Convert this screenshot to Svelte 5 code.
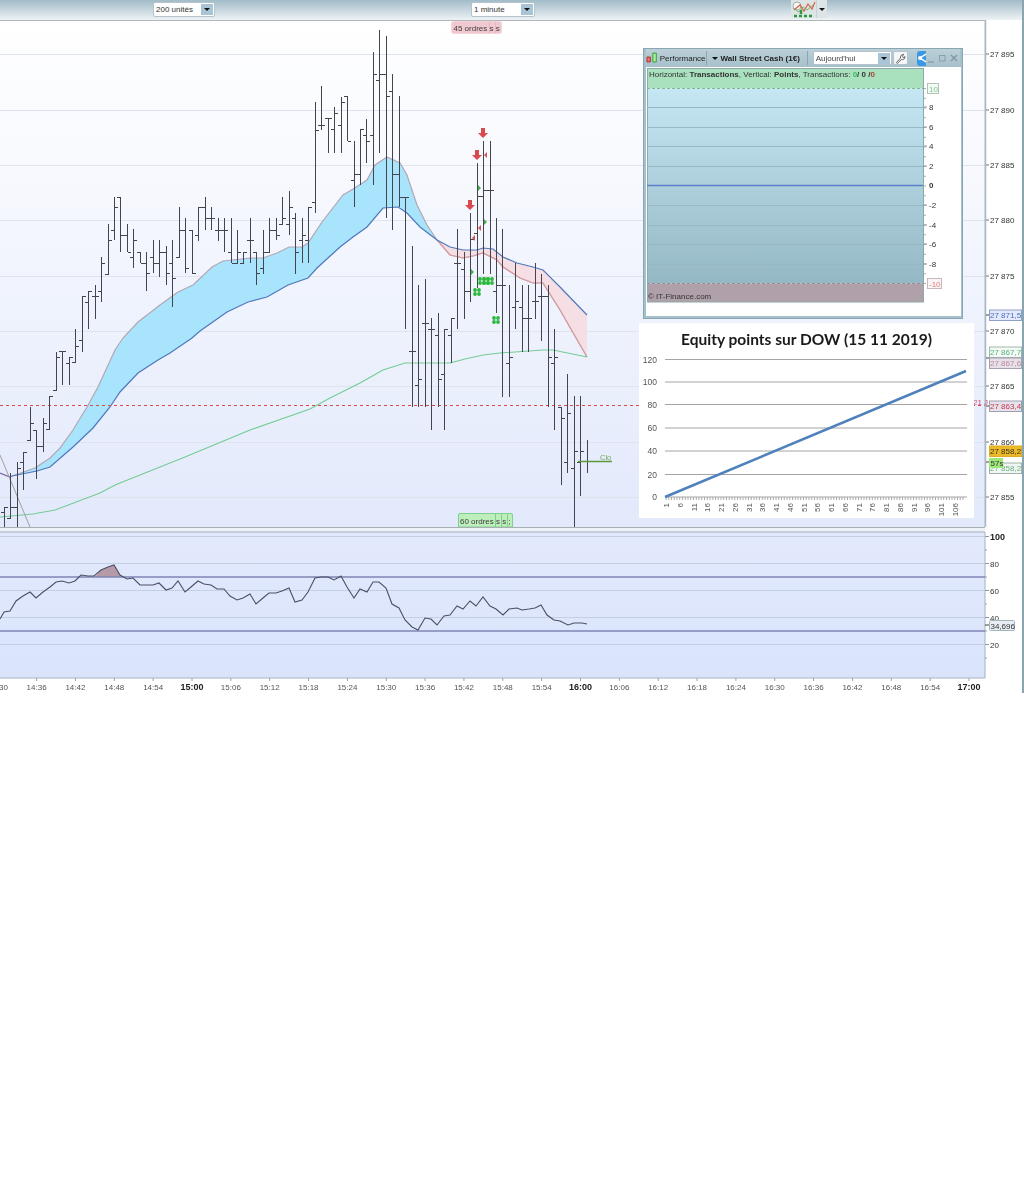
<script lang="ts">
	// [high, low, open, close] in page pixels, one bar per minute
	const bars = [
		[507, 527, 512, 507], [473, 518, 518, 507], [462, 527, 507, 468], [452, 490, 462, 452],
		[407, 440, 440, 423], [430, 479, 430, 446], [418, 452, 446, 423], [396, 429, 429, 396],
		[352, 390, 390, 357], [351, 385, 351, 351], [357, 385, 363, 357], [329, 362, 362, 346],
		[296, 352, 340, 296], [291, 329, 302, 291], [285, 319, 296, 296], [257, 302, 291, 263],
		[224, 274, 274, 240], [197, 240, 230, 207], [197, 252, 197, 235], [224, 252, 235, 252],
		[229, 268, 257, 240], [252, 263, 252, 263], [252, 291, 263, 273], [240, 273, 257, 263],
		[240, 277, 263, 252], [246, 285, 252, 273], [240, 307, 263, 278], [207, 257, 257, 230],
		[218, 273, 230, 268], [230, 274, 230, 273], [207, 241, 235, 207], [197, 230, 207, 218],
		[207, 230, 218, 218], [218, 241, 230, 230], [218, 252, 230, 230], [218, 263, 252, 263],
		[230, 263, 263, 252], [252, 263, 263, 252], [218, 263, 240, 240], [252, 285, 252, 273],
		[230, 274, 268, 252], [218, 252, 252, 230], [218, 240, 230, 235], [197, 224, 224, 218],
		[191, 235, 224, 207], [213, 274, 218, 252], [218, 263, 240, 235], [207, 263, 240, 207],
		[102, 213, 202, 130], [86, 130, 125, 125], [118, 153, 118, 118], [107, 153, 129, 113],
		[97, 153, 125, 102], [96, 141, 96, 141], [141, 207, 180, 174], [129, 185, 174, 129],
		[119, 163, 135, 141], [52, 185, 135, 74], [30, 153, 80, 74], [36, 218, 74, 96],
		[74, 230, 91, 174], [96, 207, 174, 197], [197, 329, 197, 197], [246, 407, 351, 351],
		[285, 407, 385, 379], [279, 407, 323, 323], [318, 430, 329, 329], [313, 407, 335, 379],
		[329, 430, 374, 329], [318, 363, 335, 318], [229, 329, 263, 263], [252, 319, 269, 291],
		[213, 302, 291, 239], [163, 288, 233, 196], [141, 274, 196, 190], [141, 274, 190, 190],
		[218, 313, 291, 285], [229, 397, 285, 285], [285, 397, 363, 357], [263, 329, 307, 301],
		[285, 352, 307, 318], [285, 352, 318, 318], [263, 319, 301, 301], [274, 341, 296, 296],
		[285, 407, 296, 357], [329, 430, 363, 357], [407, 485, 407, 418], [374, 473, 462, 413],
		[396, 527, 468, 451], [396, 496, 462, 451], [440, 473, 461, 461]
	];
	const barX = (k: number) => Math.round(3.9 + 6.475 * k) + 0.5;

	const ribbonTop = [[12, 476], [35, 468], [50, 458], [60, 448], [73, 430], [87, 407], [98, 387], [115, 350], [123, 338], [138, 322], [160, 305], [178, 292], [193, 285], [212, 267], [223, 261], [250, 258], [263, 258], [277, 253], [289, 247], [302, 247], [308, 243], [322, 222], [343, 195], [353, 189], [367, 180], [375, 165], [387, 157], [400, 163], [407, 175], [417, 205], [427, 225], [437, 240], [450, 255], [463, 258], [473, 256], [483, 253], [497, 260], [503, 267], [520, 278], [533, 283], [543, 283], [560, 310], [587, 357]];
	const ribbonLow = [[12, 476], [37, 471], [50, 467], [73, 447], [93, 428], [110, 407], [120, 392], [138, 373], [158, 360], [170, 353], [192, 338], [200, 331], [227, 312], [248, 302], [267, 297], [288, 285], [308, 278], [317, 268], [340, 247], [353, 237], [367, 227], [383, 208], [398, 207], [407, 213], [420, 227], [437, 240], [450, 247], [463, 250], [477, 250], [483, 248], [493, 249], [503, 257], [517, 263], [533, 267], [543, 270], [560, 287], [587, 315]];
	const longMa = [[0, 517], [33, 514], [55, 510], [100, 493], [115, 485], [185, 457], [250, 430], [310, 409], [330, 398], [360, 383], [383, 370], [405, 363], [450, 363], [465, 359], [483, 355], [500, 353], [543, 350], [553, 350], [587, 357]];
	const rsi = [[0, 619], [4, 612], [10, 611], [16, 601], [23, 596], [30, 592], [36, 598], [43, 592], [50, 587], [56, 582], [62, 581], [69, 583], [75, 581], [81, 575], [88, 576], [94, 576], [101, 570], [108, 567], [114, 565], [120, 575], [127, 579], [133, 578], [140, 585], [146, 585], [153, 585], [159, 583], [166, 590], [172, 588], [178, 581], [185, 592], [191, 587], [198, 581], [204, 584], [211, 585], [217, 589], [224, 589], [230, 596], [237, 600], [243, 598], [250, 594], [256, 604], [263, 598], [269, 593], [276, 593], [282, 591], [289, 588], [295, 602], [302, 600], [308, 592], [315, 578], [321, 577], [328, 577], [334, 580], [341, 576], [347, 587], [354, 598], [360, 589], [367, 592], [373, 582], [379, 582], [386, 588], [392, 604], [399, 608], [405, 620], [412, 627], [418, 630], [425, 618], [431, 619], [437, 625], [444, 616], [450, 615], [457, 606], [463, 609], [470, 601], [476, 606], [483, 597], [490, 606], [496, 609], [503, 615], [509, 609], [517, 608], [522, 610], [529, 609], [535, 608], [541, 605], [547, 615], [554, 620], [560, 621], [568, 625], [574, 623], [582, 623], [587, 624]];

	const toPoints = (pts: number[][]) => pts.map((p) => p.join(',')).join(' ');

	// the two averages cross once, at (437, 240)
	const crossAt = (pts: number[][]) => pts.findIndex((p) => p[0] === 437);
	const bullFill = [...ribbonTop.slice(0, crossAt(ribbonTop) + 1), ...ribbonLow.slice(0, crossAt(ribbonLow)).reverse()];
	const bearFill = [...ribbonTop.slice(crossAt(ribbonTop)), ...ribbonLow.slice(crossAt(ribbonLow)).reverse()];

	const priceGrid = [54, 110, 165, 220, 276, 331, 386, 442, 497];
	const priceLabels = [
		['27 895', 54], ['27 890', 110], ['27 885', 165], ['27 880', 220], ['27 875', 276],
		['27 870', 331], ['27 865', 386], ['27 860', 442], ['27 855', 497]
	];
	const priceTags = [
		{ text: '27 871,5', y: 315, fill: '#e4eafc', stroke: '#8fa0c8', color: '#4a6cc4' },
		{ text: '27 867,7', y: 352, fill: '#f4f8f6', stroke: '#9fb8a8', color: '#4fb878' },
		{ text: '27 867,6', y: 363, fill: '#e6e0ea', stroke: '#a8a0ac', color: '#c08a98' },
		{ text: '27 863,4', y: 406, fill: '#e4e2ec', stroke: '#a0a0ac', color: '#c8384c' },
		{ text: '27 858,2', y: 468, fill: '#f2f6f2', stroke: '#9fb0a8', color: '#68b080' },
		{ text: '27 858,2', y: 451, fill: '#ecb92a', stroke: '#e0ac20', color: '#3c3418' }
	];

	const timeLabels = ['14:36', '14:42', '14:48', '14:54', '15:00', '15:06', '15:12', '15:18', '15:24', '15:30', '15:36', '15:42', '15:48', '15:54', '16:00', '16:06', '16:12', '16:18', '16:24', '16:30', '16:36', '16:42', '16:48', '16:54', '17:00'];
	const timeX = (i: number) => 36.6 + 38.85 * i;

	const redArrows = [[470, 205], [477, 155], [483, 133]];
	const clovers = [[477, 292], [482, 281], [486, 281], [490, 281], [496, 320]];
	const redFlags = [[486, 155], [480, 228], [474, 238]];
	const greenFlags = [[479, 188], [485, 222], [472, 272]];

	const perfGrid = [107, 127, 146, 166, 205, 225, 244, 264];
	const perfLabels = [['8', 107], ['6', 127], ['4', 146], ['2', 166], ['-2', 205], ['-4', 225], ['-6', 244], ['-8', 264]];
	const perfMinor = Array.from({ length: 21 }, (_, i) => 88.5 + i * 9.75);

	const equityGrid = [[120, 359.5], [100, 382], [80, 404.5], [60, 428], [40, 451], [20, 474.5], [0, 497]];
	const equityTicks = Array.from({ length: 22 }, (_, i) => (i === 0 ? 1 : i * 5 + 1));
	const oscMinor = Array.from({ length: 10 }, (_, i) => 536.5 + i * 13.5);
</script>

<div class="terminal">
	<header class="toolbar">
		<div class="picker units"><span>200 unités</span><i></i></div>
		<div class="picker period"><span>1 minute</span><i></i></div>
		<div class="chart-style">
			<svg width="25" height="18" viewBox="0 0 25 18">
				<circle cx="6" cy="6" r="4" fill="#f6f8f6" stroke="#a8b0a8" />
				<path d="M3 10 9 5 13 11 17 4 21 9 24 2" fill="none" stroke="#d8604c" stroke-width="1.2" />
				<path d="M2 8 8 12 12 7 16 10 22 5" fill="none" stroke="#78b868" stroke-width="1" />
				<path d="M3 16h3M8 16h3M13 16h3M18 16h3M10 10v4" stroke="#2c9a3c" stroke-width="2.4" />
			</svg>
			<i></i>
		</div>
	</header>

	<section class="price-pane">
		<svg class="chart" width="1022" height="508" viewBox="0 20 1022 508">
			<defs>
				<linearGradient id="paneBg" x1="0" y1="0" x2="0" y2="1">
					<stop offset="0" stop-color="#ffffff" />
					<stop offset="0.3" stop-color="#f7f9fe" />
					<stop offset="1" stop-color="#e2e9fb" />
				</linearGradient>
			</defs>
			<rect x="0" y="20" width="985" height="507" fill="url(#paneBg)" />
			{#each priceGrid as y}
				<line x1="0" x2="985" y1={y + 0.5} y2={y + 0.5} stroke="#dfe3ee" />
			{/each}

			<polygon points={toPoints(bullFill)} fill="#a8e4fc" />
			<polygon points={toPoints(bearFill)} fill="#f6dfe4" />
			<polyline points={toPoints(ribbonTop)} fill="none" stroke="#b4a6b4" stroke-width="1.2" />
			<polyline points={toPoints(ribbonTop.slice(crossAt(ribbonTop)))} fill="none" stroke="#dc9e9e" stroke-width="1.2" />
			<polyline points={toPoints(ribbonLow)} fill="none" stroke="#4f78bc" stroke-width="1.2" />
			<polyline points="0,473 10,477 12,476" fill="none" stroke="#7c64a8" stroke-width="1.2" />
			<polyline points={toPoints(longMa)} fill="none" stroke="#74cc94" stroke-width="1.1" />
			<line x1="0" x2="30" y1="455" y2="527" stroke="#a0a0a0" />
			<line x1="0" x2="985" y1="405.5" y2="405.5" stroke="#e04848" stroke-dasharray="3 3" />

			{#each bars as [high, low, open, close], k}
				<g stroke="#44444e" shape-rendering="crispEdges">
					<line x1={barX(k)} x2={barX(k)} y1={high} y2={low} />
					<line x1={barX(k) - 3.5} x2={barX(k)} y1={open + 0.5} y2={open + 0.5} />
					<line x1={barX(k)} x2={barX(k) + 3.5} y1={close + 0.5} y2={close + 0.5} />
				</g>
			{/each}

			{#each redArrows as [x, y]}
				<path d="M{x - 2} {y - 5}h4v5h3l-5 5-5-5h3z" fill="#d84a50" />
			{/each}
			{#each redFlags as [x, y]}
				<path d="M{x - 2} {y}l3-3v6z" fill="#d4555a" />
			{/each}
			{#each greenFlags as [x, y]}
				<path d="M{x + 2} {y}l-3-3v6z" fill="#44b050" />
			{/each}
			{#each clovers as [x, y]}
				<g fill="#2cb83c">
					<circle cx={x - 2} cy={y - 2} r="1.9" />
					<circle cx={x + 2} cy={y - 2} r="1.9" />
					<circle cx={x - 2} cy={y + 2} r="1.9" />
					<circle cx={x + 2} cy={y + 2} r="1.9" />
				</g>
			{/each}

			<line x1="578" x2="612" y1="461.5" y2="461.5" stroke="#5a9a3c" stroke-width="1.4" />
			<text class="clo" x="600" y="460">Clo</text>

			<rect x="451.5" y="21.5" width="50" height="12" rx="2" fill="#f0c8d0" stroke="#f4d4da" />
			<line x1="489.5" x2="489.5" y1="22" y2="33" stroke="#e4b4c0" />
			<line x1="495.5" x2="495.5" y1="22" y2="33" stroke="#e4b4c0" />
			<text class="tag" x="453.5" y="30.5">45 ordres s s</text>
			<path d="M458.5 527v-12q0-1.500 1.500-1.500h51q1.500 0 1.500 1.500v12z" fill="#bdeebc" stroke="#7ed08c" />
			<line x1="495.5" x2="495.5" y1="514" y2="527" stroke="#7ed08c" />
			<line x1="501.5" x2="501.5" y1="514" y2="527" stroke="#7ed08c" />
			<line x1="507.5" x2="507.5" y1="514" y2="527" stroke="#7ed08c" />
			<text class="tag" x="460" y="524">60 ordres s s ;</text>

			<line x1="985.5" x2="985.5" y1="20" y2="527" stroke="#a9b8c4" stroke-width="2" />
			<line x1="0" x2="985" y1="527.5" y2="527.5" stroke="#a8b0b4" />
			<rect x="986.5" y="20" width="36" height="508" fill="#fff" />
			{#each priceLabels as [label, y]}
				<line x1="986" x2="989" y1={y} y2={y} stroke="#777" />
				<text class="axis" x="990" y={Number(y) + 3}>{label}</text>
			{/each}
			{#each [315, 358, 406, 462] as y}
				<line x1="986" x2="989" y1={y} y2={y} stroke="#444" />
			{/each}
			<text class="stop" x="973" y="405">21 J</text>
			{#each priceTags as tag}
				<rect x="989.5" y={tag.y - 5} width="32" height="10.5" fill={tag.fill} stroke={tag.stroke} />
				<text class="axis" x="990" y={tag.y + 3} fill={tag.color} style="fill: {tag.color}">{tag.text}</text>
			{/each}
			<rect x="989" y="458" width="14" height="10" fill="#9ce878" />
			<text class="axis" x="990.5" y="466">57s</text>
		</svg>

		<div class="perf-window">
			<div class="perf-title">
				<svg width="12" height="12" viewBox="0 0 12 12">
					<path d="M1 5h3.500v5h-3.500z" fill="#e87070" stroke="#b03030" />
					<path d="M7 1h3.500v9h-3.500z" fill="#a8f0a0" stroke="#30a030" />
				</svg>
				<span class="perf-name">Performance</span>
				<span class="sep"></span>
				<b class="perf-system"><i class="caret"></i>Wall Street Cash (1€)</b>
				<span class="sep"></span>
				<div class="picker today"><span>Aujourd'hui</span><i></i></div>
				<button class="wrench" aria-label="Réglages">
					<svg width="11" height="11" viewBox="0 0 12 12">
						<path d="M1.500 10.500 6 5.500C5.500 3.500 7 1.500 9.500 1.500L8 3.500l1 1.500 2-1C11 6 9 8 7 7l-4.500 4.500z" fill="#fff" stroke="#444" stroke-width="0.9" />
					</svg>
				</button>
				<span class="share">
					<svg width="9" height="14" viewBox="0 0 9 14">
						<path d="M9 3 3 7l6 4" fill="none" stroke="#fff" stroke-width="1.500" />
						<circle cx="3" cy="7" r="2" fill="#fff" />
					</svg>
				</span>
				<span class="win-controls">
					<svg width="32" height="9" viewBox="0 0 32 9">
						<path d="M0 8h6" stroke="#8aa0aa" stroke-width="1.400" />
						<rect x="11.500" y="1.500" width="5.500" height="5.500" fill="none" stroke="#8aa0aa" />
						<path d="M23 1l6 6M29 1l-6 6" stroke="#7f959f" stroke-width="1.300" />
					</svg>
				</span>
			</div>
			<svg class="perf-plot" width="315" height="249" viewBox="646 67 315 249">
				<defs>
					<linearGradient id="perfBg" x1="0" y1="0" x2="0" y2="1">
						<stop offset="0" stop-color="#c5e7f3" />
						<stop offset="1" stop-color="#95b8c5" />
					</linearGradient>
				</defs>
				<rect x="647" y="68" width="276" height="20.5" fill="#a9e1bf" />
				<rect x="647" y="88.5" width="276" height="195" fill="url(#perfBg)" />
				<rect x="647" y="283.5" width="276" height="18.5" fill="#b0a0aa" />
				<rect x="647.5" y="68.5" width="276" height="233.5" fill="none" stroke="#8ea9a9" />
				{#each perfGrid as y}
					<line x1="647" x2="923" y1={y + 0.5} y2={y + 0.5} stroke="#98b8c4" />
				{/each}
				<line x1="647" x2="923" y1="88.5" y2="88.5" stroke="#80b898" stroke-dasharray="3 2" />
				<line x1="647" x2="923" y1="283.5" y2="283.5" stroke="#9c8c98" stroke-dasharray="3 2" />
				<line x1="647" x2="923" y1="185.5" y2="185.5" stroke="#5c80cc" stroke-width="1.4" />
				<text class="perf-text" x="649" y="77">Horizontal: <tspan class="strong">Transactions</tspan>, Vertical: <tspan class="strong">Points</tspan>, Transactions: <tspan class="strong ok">0</tspan><tspan class="strong"> / 0 / </tspan><tspan class="strong ko">0</tspan></text>
				<text class="perf-text" x="648" y="299">© IT-Finance.com</text>
				{#each perfMinor as y}
					<line x1="924" x2="926" y1={y} y2={y} stroke="#a0aeb4" />
				{/each}
				{#each perfLabels as [label, y]}
					<line x1="924" x2="927" y1={y} y2={y} stroke="#8a9aa0" />
					<text class="perf-text" x="929" y={Number(y) + 3}>{label}</text>
				{/each}
				<text class="perf-text strong" x="929" y="188">0</text>
				<rect x="927.5" y="83.5" width="11" height="10" fill="#f4faf4" stroke="#b0c4b4" />
				<text class="perf-text up" x="929" y="91.5">10</text>
				<rect x="927.5" y="278.5" width="14" height="10" fill="#fbf4f4" stroke="#c4b8bc" />
				<text class="perf-text down" x="929" y="286.5">-10</text>
			</svg>
		</div>

		<figure class="equity">
			<h3>Equity points sur DOW (15 11 2019)</h3>
			<svg width="335" height="168" viewBox="639 350 335 168">
				{#each equityGrid as [value, y]}
					<line x1="665" x2="967" y1={y} y2={y} stroke="#a4a4a4" />
					<text class="equity-y" x="657" y={y + 3}>{value}</text>
				{/each}
				{#each Array(109) as _, i}
					<line x1={666 + i * 2.75} x2={666 + i * 2.75} y1="497" y2="500" stroke="#aaa" />
				{/each}
				{#each equityTicks as tick}
					<text class="equity-x" transform="translate({666 + (tick - 1) * 2.75 + 3} 503) rotate(-90)">{tick}</text>
				{/each}
				<line x1="665" y1="497" x2="966" y2="371" stroke="#4f81bd" stroke-width="2.6" />
			</svg>
		</figure>
	</section>

	<section class="osc-pane">
		<svg width="1022" height="165" viewBox="0 528 1022 165">
			<defs>
				<linearGradient id="oscBg" x1="0" y1="0" x2="0" y2="1">
					<stop offset="0" stop-color="#e3e9fd" />
					<stop offset="1" stop-color="#d9e4fb" />
				</linearGradient>
			</defs>
			<rect x="0" y="528" width="985" height="4" fill="#eef2f8" />
			<rect x="0" y="532" width="985" height="146" fill="url(#oscBg)" />
			<line x1="0" x2="985" y1="532" y2="532" stroke="#a4b2bc" />
			<line x1="985" x2="985" y1="532" y2="678" stroke="#a4b2bc" />
			<line x1="0" x2="985" y1="678" y2="678" stroke="#a8b4c4" />
			{#each [536.5, 563.5, 590.5, 617.5, 644.5] as y}
				<line x1="0" x2="985" y1={y} y2={y} stroke="#c2cfe4" />
			{/each}
			<polygon points="95,577 101,570 108,567 114,565 120,575 122,577" fill="#b79aa8" />
			<line x1="0" x2="985" y1="577" y2="577" stroke="#7f84b4" stroke-width="1.4" />
			<line x1="0" x2="985" y1="631" y2="631" stroke="#7f84b4" stroke-width="1.4" />
			<polyline points={toPoints(rsi)} fill="none" stroke="#4c5064" stroke-width="1.1" />
			{#each oscMinor as y}
				<line x1="985" x2="987" y1={y} y2={y} stroke="#9aa6b0" />
			{/each}
			{#each [[100, 536.5], [80, 563.5], [60, 590.5], [40, 617.5], [20, 644.5]] as [value, y]}
				<line x1="985" x2="989" y1={y} y2={y} stroke="#8a96a0" />
				<text class="axis" class:strong={value === 100} x="990" y={y + 3}>{value}</text>
			{/each}
			<rect x="989.5" y="620.5" width="25" height="10" rx="1" fill="#e8eef4" stroke="#a4b4bc" />
			<line x1="985" x2="989" y1="625" y2="625" stroke="#444" />
			<text class="axis" x="990.5" y="628.5">34,696</text>
			<text class="axis time" x="-1" y="690">30</text>
			{#each timeLabels as label, i}
				<line x1={timeX(i)} x2={timeX(i)} y1="678" y2="681" stroke="#9aa4b0" />
				<text class="axis time" class:strong={label.endsWith(':00')} x={timeX(i)} y="690" text-anchor="middle">{label}</text>
			{/each}
		</svg>
	</section>
</div>

<style>
	:global(body) {
		background: #fff;
		font-family: 'Liberation Sans', Arial, sans-serif;
	}

	.terminal {
		position: relative;
		display: flex;
		flex-direction: column;
		width: 1022px;
		height: 693px;
		border-right: 2px solid #8aa4b0;
		overflow: hidden;
		filter: blur(0.35px);
	}

	.toolbar {
		display: flex;
		align-items: flex-start;
		height: 20px;
		padding-top: 2px;
		padding-left: 153px;
		box-sizing: border-box;
		background: linear-gradient(#a2bbc8, #eef3f5);
	}

	.picker {
		display: flex;
		align-items: center;
		justify-content: space-between;
		height: 15px;
		box-sizing: border-box;
		padding: 0 1px 0 2px;
		background: #fff;
		border: 1px solid #b4c4cc;
		border-radius: 2px;
		font-size: 8px;
		color: #333;
	}

	.picker i {
		display: flex;
		align-items: center;
		justify-content: center;
		width: 12px;
		height: 11px;
		background: #a9c4d4;
	}

	.picker i::after,
	.chart-style i::after,
	.caret::after {
		content: '';
		border: 3px solid transparent;
		border-top-color: #111;
		border-bottom-width: 0;
	}

	.units {
		width: 62px;
		margin-right: 256px;
	}

	.period {
		width: 64px;
		margin-right: 256px;
	}

	.chart-style {
		display: flex;
		height: 18px;
		margin-top: -2px;
		background: #dde4e6;
		border-radius: 0 0 3px 3px;
	}

	.chart-style i {
		display: flex;
		align-items: center;
		justify-content: center;
		width: 10px;
		border-left: 1px solid #c8d2d6;
	}

	.price-pane {
		position: relative;
		height: 508px;
	}

	.chart,
	.osc-pane svg {
		display: block;
	}

	.price-pane::before {
		content: '';
		position: absolute;
		top: 0;
		left: 0;
		width: 986px;
		height: 1px;
		background: #b0b6ba;
		z-index: 1;
	}

	.axis {
		font-size: 8px;
		fill: #333;
	}

	.axis.time {
		fill: #555;
	}

	.strong {
		font-weight: 700;
	}

	.axis.strong {
		font-size: 9px;
		fill: #222;
	}

	.tag {
		font-size: 8px;
		fill: #3c3c3c;
	}

	.clo {
		font-size: 7.5px;
		fill: #70a860;
	}

	.stop {
		font-size: 8px;
		fill: #d0507a;
	}

	.perf-window {
		position: absolute;
		left: 643px;
		top: 28px;
		width: 320px;
		height: 271px;
		box-sizing: border-box;
		padding: 0 2px 2px;
		background: #a6c0cb;
		border: 1px solid #8aa6b2;
	}

	.perf-title {
		display: flex;
		align-items: center;
		height: 18px;
		font-size: 8px;
		color: #222;
		background: linear-gradient(#bcd0d8, #a6c0cb);
	}

	.perf-name {
		margin-left: 2px;
		width: 46px;
	}

	.sep {
		width: 1px;
		height: 14px;
		background: #8fa6b0;
	}

	.perf-system {
		display: flex;
		align-items: center;
		gap: 3px;
		width: 102px;
		padding-left: 5px;
		box-sizing: border-box;
		white-space: nowrap;
	}

	.caret {
		display: inline-flex;
	}

	.today {
		width: 81px;
		height: 14px;
		margin-left: 5px;
		color: #444;
	}

	.wrench {
		display: flex;
		align-items: center;
		justify-content: center;
		width: 15px;
		height: 14px;
		margin-left: 1px;
		padding: 0;
		background: #f4f7f8;
		border: 1px solid #b4c4cc;
		border-radius: 2px;
	}

	.share {
		display: flex;
		width: 9px;
		height: 15px;
		margin-left: 9px;
		background: #3a98e4;
		border-radius: 3px 0 0 3px;
	}

	.win-controls {
		display: flex;
		margin-left: 2px;
	}

	.perf-plot {
		display: block;
		background: #fff;
	}

	.perf-text {
		font-size: 8px;
		fill: #333;
		white-space: pre;
	}

	.ok {
		fill: #3cb860;
	}

	.ko {
		fill: #a84830;
	}

	.up {
		fill: #80c890;
	}

	.down {
		fill: #e08080;
	}

	.equity {
		position: absolute;
		left: 639px;
		top: 303px;
		width: 335px;
		height: 195px;
		margin: 0;
		background: #fff;
	}

	.equity h3 {
		margin: 0;
		height: 27px;
		padding-top: 5px;
		box-sizing: border-box;
		font-family: Lato, 'Open Sans', sans-serif;
		font-size: 15.5px;
		font-weight: 700;
		line-height: 22px;
		text-align: center;
		color: #1a1a1a;
	}

	.equity svg {
		display: block;
	}

	.equity-y {
		font-size: 8.5px;
		fill: #555;
		text-anchor: end;
	}

	.equity-x {
		font-size: 8px;
		fill: #555;
		text-anchor: end;
	}
</style>
